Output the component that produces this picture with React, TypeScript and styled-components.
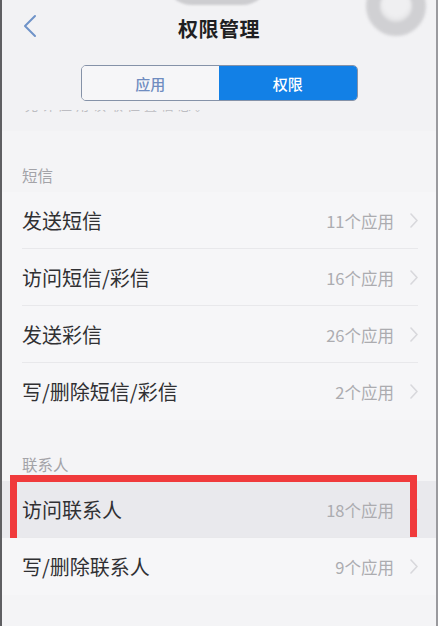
import styled, { createGlobalStyle } from "styled-components";

const GlobalStyle = createGlobalStyle`
  html, body {
    margin: 0;
    padding: 0;
    background: #f3f3f5;
  }
  body {
    font-family: "Noto Sans CJK SC", "Noto Sans", sans-serif;
  }
`;

interface IRow {
  label: string;
  count: string;
  active?: boolean;
}

const sms: IRow[] = [
  { label: "发送短信", count: "11个应用" },
  { label: "访问短信/彩信", count: "16个应用" },
  { label: "发送彩信", count: "26个应用" },
  { label: "写/删除短信/彩信", count: "2个应用" },
];

const contacts: IRow[] = [
  { label: "访问联系人", count: "18个应用", active: true },
  { label: "写/删除联系人", count: "9个应用" },
];

const Chevron = ({ color, w, h }: { color: string; w: number; h: number }) => (
  <svg width={w} height={h} viewBox={`0 0 ${w} ${h}`} fill="none">
    <path
      d={`M1 1 L${w - 1} ${h / 2} L1 ${h - 1}`}
      stroke={color}
      strokeWidth="1.6"
      strokeLinecap="round"
      strokeLinejoin="round"
    />
  </svg>
);

const BackIcon = () => (
  <svg width="14" height="24" viewBox="0 0 14 24" fill="none">
    <path
      d="M12 2 L2 12 L12 22"
      stroke="#6f93c8"
      strokeWidth="2"
      strokeLinecap="round"
      strokeLinejoin="round"
    />
  </svg>
);

const Row: React.FC<IRow & { last?: boolean }> = ({ label, count, active, last }) => (
  <RowStyled $active={active} $last={last}>
    <RowLabel>{label}</RowLabel>
    <RowRight>
      <Count>{count}</Count>
      <Chevron color="#d8d8dc" w={8} h={15} />
    </RowRight>
    {active && <Highlight />}
  </RowStyled>
);

const Section: React.FC<{ title: string; rows: IRow[] }> = ({ title, rows }) => (
  <SectionStyled>
    <SectionTitle>{title}</SectionTitle>
    {rows.map((r, i) => (
      <Row key={r.label} {...r} last={i === rows.length - 1} />
    ))}
  </SectionStyled>
);

const App = () => {
  return (
    <>
      <GlobalStyle />
      <Screen>
        <Notch />
        <FloatRing />
        <Header>
          <NavBar>
            <BackButton>
              <BackIcon />
            </BackButton>
            <Title>权限管理</Title>
          </NavBar>
          <Segmented>
            <Segment>应用</Segment>
            <Segment $selected>权限</Segment>
          </Segmented>
          <ClippedLine>
            <span>允许应用读取位置信息。</span>
          </ClippedLine>
        </Header>
        <Section title="短信" rows={sms} />
        <Section title="联系人" rows={contacts} />
      </Screen>
    </>
  );
};

const Screen = styled.div`
  position: relative;
  width: 438px;
  height: 626px;
  overflow: hidden;
  background: #f4f4f6;

  &::after {
    content: "";
    position: absolute;
    inset: 0;
    pointer-events: none;
    box-shadow: inset 2px 0 0 #5f5f62, inset -2px 0 0 #9a9a9e;
  }
`;

const Notch = styled.div`
  position: absolute;
  top: -20px;
  left: 166px;
  width: 102px;
  height: 25px;
  border-radius: 0 0 40px 40px;
  background: #cdcdd0;
  filter: blur(1px);
`;

const FloatRing = styled.div`
  position: absolute;
  top: -24px;
  left: 366px;
  width: 60px;
  height: 60px;
  border-radius: 50%;
  box-sizing: border-box;
  border: 14px solid #d0d0d3;
  background: #efeff1;
  box-shadow: inset 0 -2px 5px rgba(0, 0, 0, 0.08);
  filter: blur(1.5px);
`;

const Header = styled.div`
  height: 131px;
  background: #f2f2f4;
  display: flex;
  flex-direction: column;
  align-items: center;
`;

const NavBar = styled.div`
  position: relative;
  width: 100%;
  height: 56px;
  display: flex;
  align-items: center;
  justify-content: center;
`;

const BackButton = styled.div`
  position: absolute;
  left: 23px;
  top: 14px;
  display: flex;
`;

const Title = styled.h1`
  margin: 0;
  font-size: 20px;
  font-weight: 700;
  color: #1f1f22;
  letter-spacing: 0.5px;
`;

const Segmented = styled.div`
  margin-top: 9px;
  width: 277px;
  height: 36px;
  display: grid;
  grid-template-columns: 1fr 1fr;
  border: 1.5px solid #8592a8;
  border-radius: 5px;
  overflow: hidden;
  box-sizing: border-box;
`;

const Segment = styled.div<{ $selected?: boolean }>`
  display: flex;
  align-items: center;
  justify-content: center;
  font-size: 15px;
  font-weight: 500;
  color: ${({ $selected }) => ($selected ? "#ffffff" : "#6f8cc0")};
  background: ${({ $selected }) => ($selected ? "#1280e6" : "#f6f6f8")};
`;

const ClippedLine = styled.div`
  align-self: flex-start;
  margin: 9px 0 0 25px;
  height: 3px;
  overflow: hidden;

  span {
    display: block;
    margin-top: -14px;
    font-size: 13px;
    line-height: 18px;
    color: #bdbdc2;
    letter-spacing: 4px;
  }
`;

const SectionStyled = styled.section`
  margin-top: 24px;
  display: flex;
  flex-direction: column;
`;

const SectionTitle = styled.div`
  height: 37px;
  box-sizing: border-box;
  padding: 10px 22px 0;
  font-size: 15.5px;
  line-height: 20px;
  color: #a3a3a8;
`;

const RowStyled = styled.div<{ $active?: boolean; $last?: boolean }>`
  position: relative;
  height: 57px;
  display: flex;
  align-items: center;
  justify-content: space-between;
  padding: 0 20px 0 22px;
  background: ${({ $active }) => ($active ? "#e9e9ed" : "#f6f6f8")};

  &::after {
    content: "";
    display: ${({ $last }) => ($last ? "none" : "block")};
    position: absolute;
    left: 22px;
    right: 20px;
    bottom: 0;
    height: 1px;
    background: #e8e8eb;
  }
`;

const RowLabel = styled.span`
  font-size: 20px;
  color: #303033;
`;

const RowRight = styled.div`
  display: flex;
  align-items: center;
  gap: 16px;
`;

const Count = styled.span`
  font-size: 16.5px;
  color: #acacb0;
`;

const Highlight = styled.div`
  position: absolute;
  top: -6px;
  bottom: -9px;
  left: 10px;
  right: 21px;
  border: 7px solid #f03a3c;
  pointer-events: none;
`;

export default App;
